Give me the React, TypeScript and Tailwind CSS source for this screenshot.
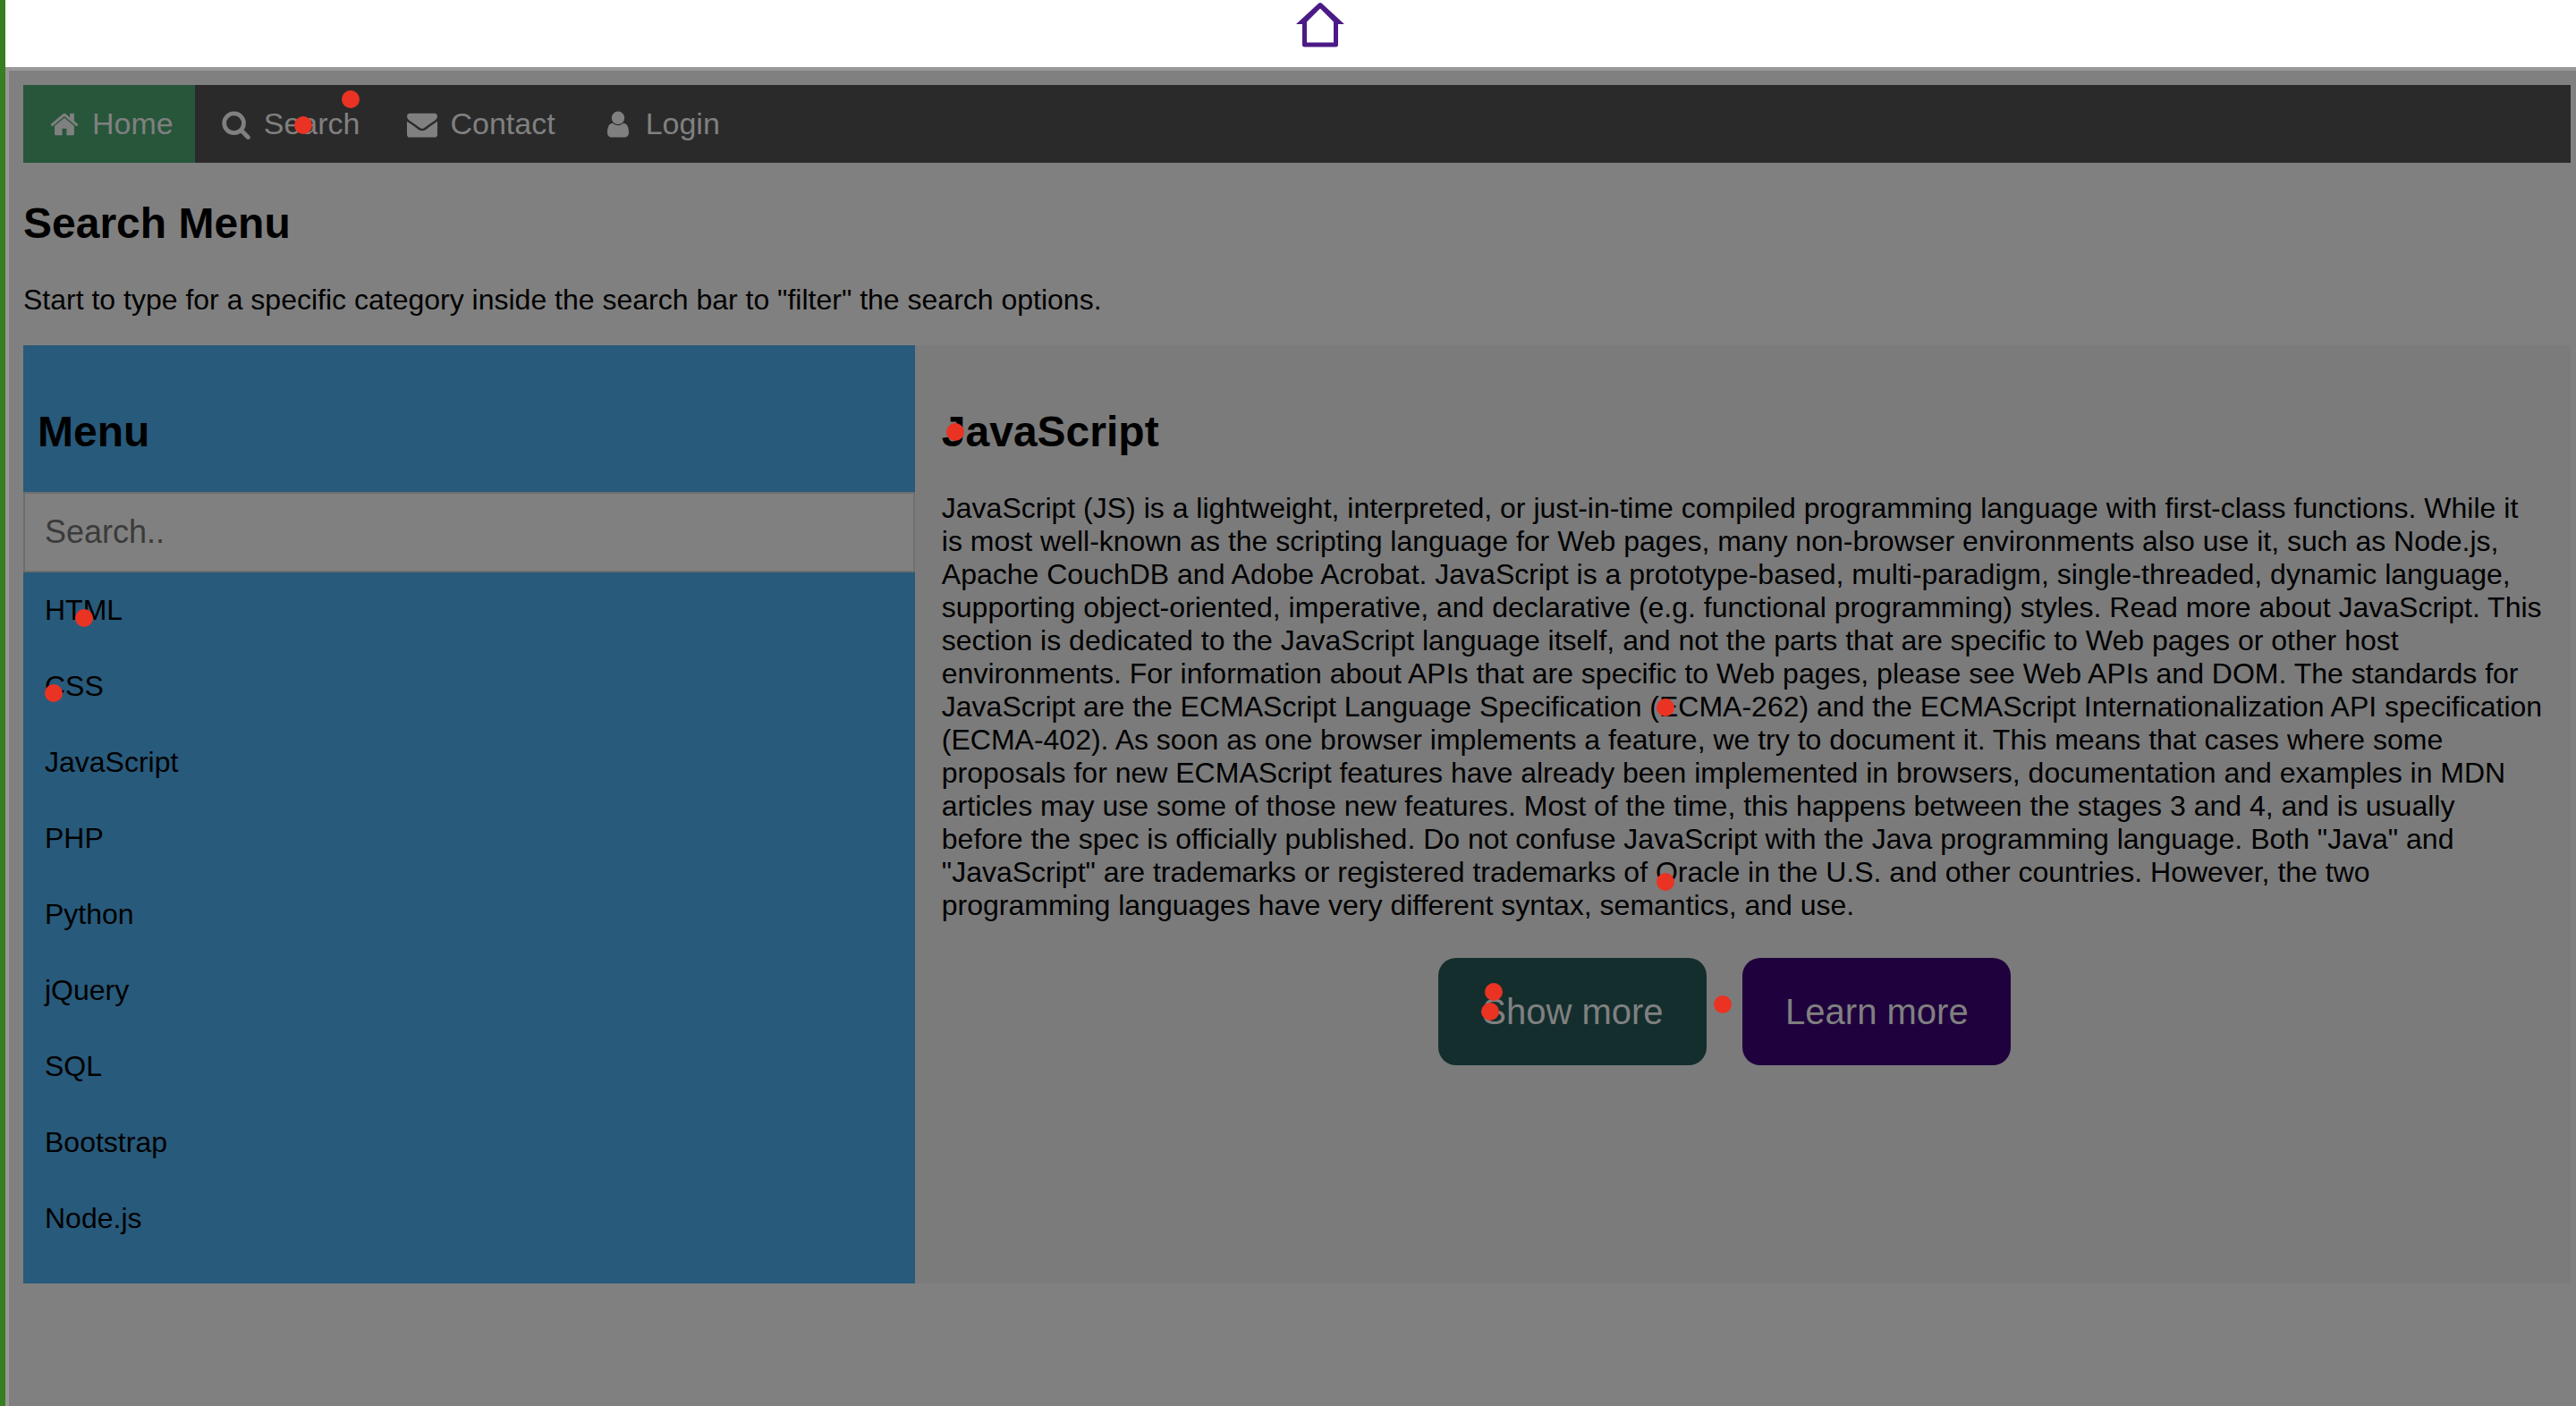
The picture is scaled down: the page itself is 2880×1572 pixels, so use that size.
const navItems = [
  {
    label: "Home",
    active: true,
    viewBox: "0 -1536 1664 1792",
    width: 32,
    d: "M1408 -544v480q0 26 -19 45t-45 19h-384v-384h-256v384h-384q-26 0 -45 -19t-19 -45v-480q0 -1 .5 -3t.5 -3l575 -474l575 474q1 2 1 6zM1631 -613l-62 74q-8 9 -21 11h-3q-13 0 -21 -7l-692 -577l-692 577q-12 8 -24 7q-13 -2 -21 -11l-62 -74q-8 -10 -7 -23.5t11 -21.5l719 -599q32 -26 76 -26t76 26l244 204v-195q0 -14 9 -23t23 -9h192q14 0 23 9t9 23v408l219 182q10 8 11 21.5t-7 23.5z",
  },
  {
    label: "Search",
    active: false,
    viewBox: "0 -1536 1664 1792",
    width: 32,
    d: "M1152 -704q0 185 -131.500 316.500t-316.500 131.500t-316.500 -131.500t-131.500 -316.500t131.500 -316.500t316.500 -131.500t316.500 131.500t131.500 316.500zM1664 128q0 -53 -37 -90l-343 -344q124 -179 124 -398q0 -143 -55.500 -272.500t-150 -223.500t-223.500 -149.500t-273 -55.500t-273 55.500t-223.500 149.500t-149.500 223.500t-55.500 272.500t55.500 272.500t149.500 223.500t223.500 149.500t273 55.500q220 0 399 -124l343 343q36 37 90 37q52 0 90 -38t38 -89z",
  },
  {
    label: "Contact",
    active: false,
    viewBox: "0 -1536 1792 1792",
    width: 34,
    d: "M1792 -826v794q0 66 -47 113t-113 47h-1472q-66 0 -113 -47t-47 -113v-794q44 49 101 87q362 246 497 345q57 42 92.500 65.500t94.500 48t110 24.500h1h1q51 0 110 -24.500t94.500 -48t92.500 -65.500q170 -123 498 -345q57 -39 100 -87zM1792 -1120q0 79 -49 151t-122 123q-376 261 -468 325q-10 7 -42.500 30.500t-54 38t-52 32.500t-57.500 27t-50 9h-1h-1q-23 0 -50 -9t-57.500 -27t-52 -32.500t-54 -38t-42.500 -30.500q-91 -64 -262 -182.500t-205 -142.500q-62 -42 -117 -115.500t-55 -136.500q0 -78 41.500 -130t118.500 -52h1472q65 0 112.500 47t47.500 113z",
  },
  {
    label: "Login",
    active: false,
    viewBox: "0 -1536 1280 1792",
    width: 24,
    d: "M1280 -137q0 109 -62.500 187t-150.500 78h-854q-88 0 -150.500 -78t-62.500 -187q0 -85 8.500 -160.500t31.500 -152t58.500 -131t94 -89t134.500 -34.500q131 128 313 128t313 -128q76 0 134.500 34.500t94 89t58.500 131t31.500 152t8.500 160.500zM1024 -1024q0 159 -112.500 271.500t-271.500 112.500t-271.500 -112.500t-112.500 -271.500t112.500 -271.500t271.500 -112.500t271.500 112.500t112.500 271.500z",
  },
];

const topics = ["HTML", "CSS", "JavaScript", "PHP", "Python", "jQuery", "SQL", "Bootstrap", "Node.js"];

const article =
  'JavaScript (JS) is a lightweight, interpreted, or just-in-time compiled programming language with first-class functions. While it is most well-known as the scripting language for Web pages, many non-browser environments also use it, such as Node.js, Apache CouchDB and Adobe Acrobat. JavaScript is a prototype-based, multi-paradigm, single-threaded, dynamic language, supporting object-oriented, imperative, and declarative (e.g. functional programming) styles. Read more about JavaScript. This section is dedicated to the JavaScript language itself, and not the parts that are specific to Web pages or other host environments. For information about APIs that are specific to Web pages, please see Web APIs and DOM. The standards for JavaScript are the ECMAScript Language Specification (ECMA-262) and the ECMAScript Internationalization API specification (ECMA-402). As soon as one browser implements a feature, we try to document it. This means that cases where some proposals for new ECMAScript features have already been implemented in browsers, documentation and examples in MDN articles may use some of those new features. Most of the time, this happens between the stages 3 and 4, and is usually before the spec is officially published. Do not confuse JavaScript with the Java programming language. Both "Java" and "JavaScript" are trademarks or registered trademarks of Oracle in the U.S. and other countries. However, the two programming languages have very different syntax, semantics, and use.';

// Centres of the recorded click markers on the page canvas.
const clicks = [
  { x: 392, y: 111 },
  { x: 339, y: 140 },
  { x: 94, y: 691 },
  { x: 60, y: 775 },
  { x: 1068, y: 483 },
  { x: 1862, y: 791 },
  { x: 1862, y: 986 },
  { x: 1670, y: 1109 },
  { x: 1666, y: 1131 },
  { x: 1926, y: 1123 },
];

function ClickMarkers() {
  return (
    <div className="pointer-events-none absolute inset-y-0 right-0 -left-1.5 overflow-hidden">
      {clicks.map((c) => (
        <span
          key={`${c.x}-${c.y}`}
          className="absolute size-5 -translate-x-1/2 -translate-y-1/2 rounded-full bg-[#ea3323]"
          style={{ left: c.x, top: c.y }}
        />
      ))}
    </div>
  );
}

export default function App() {
  return (
    <div className="relative flex min-h-screen flex-col border-l-6 border-[#377d22] bg-white font-['Liberation_Sans',Arial,sans-serif] text-[32px] leading-[37px] text-black">
      <header className="flex h-[75px] justify-center pl-[66px]">
        <a href="#home" aria-label="Back to start" className="h-14">
          <svg viewBox="0 0 60 56" className="h-14 w-[60px]" fill="none" stroke="#4b1a86">
            <path d="M12.500 23v27h35V23" strokeWidth="5" strokeLinejoin="round" />
            <path d="M28.500 3.500Q30 2.500 31.500 3.500L57 27h-9.500L30 9.500 12.500 27H3Z" fill="#4b1a86" stroke="none" />
          </svg>
        </a>
      </header>

      <main className="flex-1 border-t-4 border-l-4 border-[#999999] bg-[#808080] pt-4 pr-1.5 pl-4">
        <nav className="flex h-[87px] bg-[#2a2a2a] text-[34px] leading-[39px] text-[#808080]">
          {navItems.map((item) => (
            <a
              key={item.label}
              href={`#${item.label.toLowerCase()}`}
              className={item.active ? "flex items-center gap-[9px] bg-[#27563b] px-6" : "flex items-center gap-[9px] px-6"}
            >
              <span className="flex w-11 justify-center">
                <svg viewBox={item.viewBox} width={item.width} height={34} fill="currentColor" aria-hidden="true">
                  <path d={item.d} />
                </svg>
              </span>
              {item.label}
            </a>
          ))}
        </nav>

        <h2 className="my-10 text-[48px] leading-[55px] font-bold">Search Menu</h2>
        <p className="mb-8">Start to type for a specific category inside the search bar to "filter" the search options.</p>

        <div className="flex">
          <aside className="w-[35%] bg-[#285a7b] pt-[29px] pb-[30px]">
            <h2 className="my-10 pl-4 text-[48px] leading-[55px] font-bold">Menu</h2>
            <input
              type="text"
              aria-label="Search categories"
              placeholder="Search.."
              className="block h-[90px] w-full border-2 border-[#6e6e6e] bg-[#808080] px-[22px] text-[36px] outline-none placeholder:text-[#3b3b3b]"
            />
            <ul>
              {topics.map((topic) => (
                <li key={topic}>
                  <a href={`#${topic}`} className="block p-6">
                    {topic}
                  </a>
                </li>
              ))}
            </ul>
          </aside>

          <section className="w-[65%] bg-[#7b7b7b] px-[30px] pt-[29px] pb-[30px]">
            <h2 className="my-10 text-[48px] leading-[55px] font-bold">JavaScript</h2>
            <p>{article}</p>
            <div className="mt-10 flex justify-center gap-10 pr-10 text-[40px] leading-[46px] text-[#808080]">
              <button type="button" className="h-[120px] w-[300px] rounded-[20px] bg-[#142e2e]">
                Show more
              </button>
              <button type="button" className="h-[120px] w-[300px] rounded-[20px] bg-[#1f023d]">
                Learn more
              </button>
            </div>
          </section>
        </div>
      </main>

      <ClickMarkers />
    </div>
  );
}
